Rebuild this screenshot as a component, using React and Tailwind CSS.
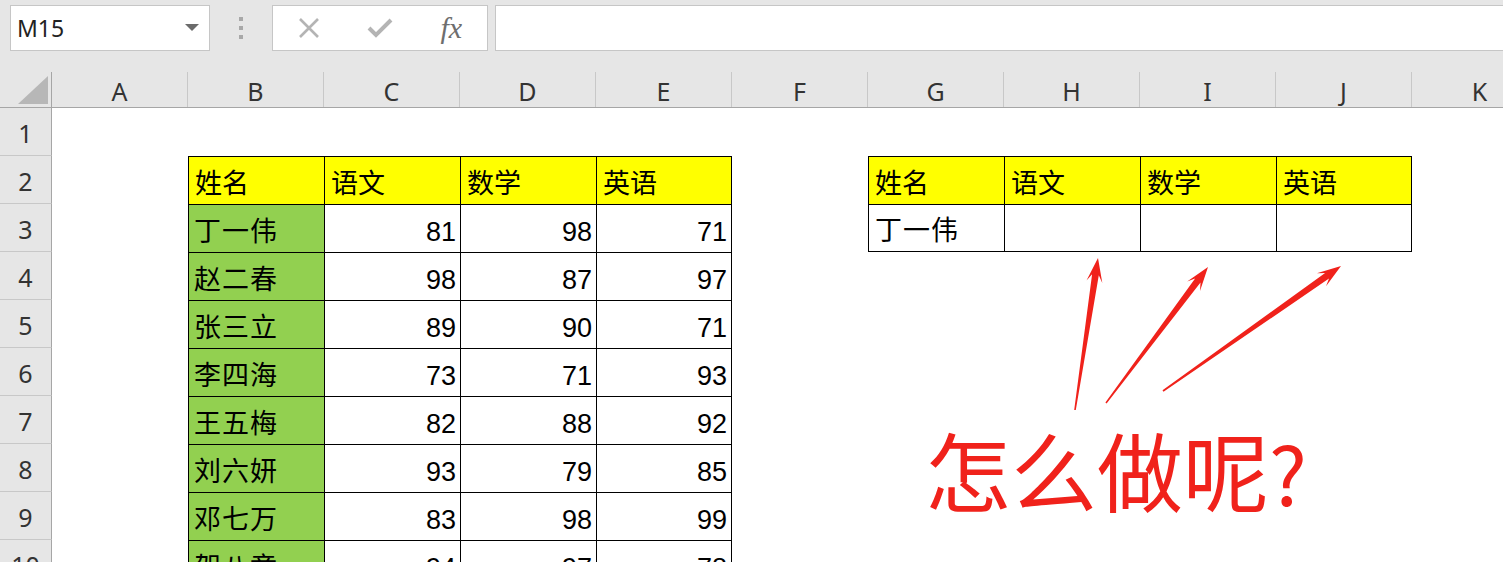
import React from 'react';

const COLS = ['A', 'B', 'C', 'D', 'E', 'F', 'G', 'H', 'I', 'J', 'K'];

const scores = [
  ['丁一伟', 81, 98, 71],
  ['赵二春', 98, 87, 97],
  ['张三立', 89, 90, 71],
  ['李四海', 73, 71, 93],
  ['王五梅', 82, 88, 92],
  ['刘六妍', 93, 79, 85],
  ['邓七万', 83, 98, 99],
  ['贺八章', 94, 97, 78],
];

const heads = ['姓名', '语文', '数学', '英语'];

const cjk = { fontFamily: '"Noto Sans CJK SC", "Noto Sans", sans-serif' };
const arial = { fontFamily: '"Liberation Sans", Arial, sans-serif' };
const ui = { fontFamily: '"Noto Sans", "Noto Sans CJK SC", sans-serif' };

// cell content for sheet row r (1-based), column c (0 = A)
function cellFor(r, c) {
  // left table: B..E, rows 2..10
  if (c >= 1 && c <= 4 && r >= 2) {
    const col = c - 1;
    const cls = 'border-l border-t border-black ' + (col === 3 ? 'border-r ' : '');
    if (r === 2) {
      return (
        <div className={cls + 'h-full bg-[#ffff00] flex items-center pl-[6px] pt-[3px] text-[27px] text-black'} style={cjk}>
          {heads[col]}
        </div>
      );
    }
    const row = scores[r - 3];
    if (!row) return null;
    if (col === 0) {
      return (
        <div className={cls + 'h-full bg-[#92d050] flex items-center pl-[5px] pt-[3px] text-[27px] text-black tracking-[1px]'} style={cjk}>
          {row[0]}
        </div>
      );
    }
    return (
      <div className={cls + 'h-full bg-white flex items-center justify-end pr-[4px] pt-[7px] text-[27px] text-black'} style={arial}>
        {row[col]}
      </div>
    );
  }
  // right table: G..J, rows 2..3
  if (c >= 6 && c <= 9 && (r === 2 || r === 3)) {
    const col = c - 6;
    const cls = 'border-l border-t border-black ' + (col === 3 ? 'border-r ' : '') + (r === 3 ? 'border-b ' : '');
    if (r === 2) {
      return (
        <div className={cls + 'h-full bg-[#ffff00] flex items-center pl-[6px] pt-[3px] text-[27px] text-black'} style={cjk}>
          {heads[col]}
        </div>
      );
    }
    return (
      <div className={cls + 'h-full bg-white flex items-center pl-[6px] pt-[3px] text-[27px] text-black tracking-[1px]'} style={cjk}>
        {col === 0 ? '丁一伟' : ''}
      </div>
    );
  }
  return null;
}

function arrowPoints(tx, ty, px, py) {
  const dx = px - tx;
  const dy = py - ty;
  const len = Math.hypot(dx, dy);
  const ux = dx / len;
  const uy = dy / len;
  const nx = -uy;
  const ny = ux;
  const p = (a, b) => `${(px - ux * a + nx * b).toFixed(1)},${(py - uy * a + ny * b).toFixed(1)}`;
  const tail = (b) => `${(tx + nx * b).toFixed(1)},${(ty + ny * b).toFixed(1)}`;
  return [tail(0.8), p(17, 3.4), p(24, 8), `${px},${py}`, p(24, -8), p(17, -3.4), tail(-0.8)].join(' ');
}

function Arrows() {
  return (
    <svg className="absolute left-0 top-0 pointer-events-none" width="1503" height="562">
      <polygon points={arrowPoints(1075, 410, 1098, 258)} fill="#f0221b" />
      <polygon points={arrowPoints(1106, 403, 1208, 267)} fill="#f0221b" />
      <polygon points={arrowPoints(1163, 391, 1341, 266)} fill="#f0221b" />
    </svg>
  );
}

function Toolbar() {
  return (
    <div className="h-[72px] bg-[#e6e6e6] flex items-start pt-[5px] pl-[10px]">
      <div className="w-[200px] h-[46px] bg-white border border-[#c6c6c6] flex items-center justify-between pl-[6px] pr-[10px]">
        <span className="text-[23px] text-[#222]" style={ui}>M15</span>
        <svg width="14" height="8" viewBox="0 0 14 8"><polygon points="0,0 14,0 7,7" fill="#6b6b6b" /></svg>
      </div>
      <div className="w-[62px] h-[46px] flex flex-col items-center justify-center gap-[5px]">
        <div className="w-[4px] h-[4px] bg-[#a8a8a8]" />
        <div className="w-[4px] h-[4px] bg-[#a8a8a8]" />
        <div className="w-[4px] h-[4px] bg-[#a8a8a8]" />
      </div>
      <div className="w-[216px] h-[46px] bg-white border border-[#c6c6c6] flex items-center">
        <div className="w-[72px] flex justify-center">
          <svg width="22" height="22" viewBox="0 0 22 22">
            <path d="M2 2 L20 20 M20 2 L2 20" stroke="#b4b4b4" strokeWidth="2.6" />
          </svg>
        </div>
        <div className="w-[72px] flex justify-center">
          <svg width="26" height="22" viewBox="0 0 26 22">
            <path d="M2 11 L9 18 L24 3" stroke="#b4b4b4" strokeWidth="4" fill="none" />
          </svg>
        </div>
        <div className="w-[72px] flex justify-center">
          <span className="text-[30px] italic text-[#6e6e6e] leading-none" style={{ fontFamily: '"Liberation Serif", "Times New Roman", serif' }}>fx</span>
        </div>
      </div>
      <div className="ml-[7px] flex-1 h-[46px] bg-white border border-[#c6c6c6] border-r-0" />
    </div>
  );
}

export default function App() {
  const rows = Array.from({ length: 10 }, (_, i) => i + 1);
  return (
    <div className="relative w-[1503px] h-[562px] overflow-hidden bg-white">
      <Toolbar />
      {/* column header */}
      <div className="flex h-[36px] bg-[#e6e6e6] border-b border-[#a6a6a6]">
        <div className="w-[52px] shrink-0 border-r border-[#a6a6a6] flex items-end justify-end pr-[3px] pb-[3px]">
          <svg width="30" height="28" viewBox="0 0 30 28"><polygon points="30,0 30,28 0,28" fill="#b7b7b7" /></svg>
        </div>
        {COLS.map((c) => (
          <div key={c} className="w-[136px] shrink-0 border-r border-[#c8c8c8] flex items-center justify-center text-[25px] text-[#333] pt-[4px]" style={ui}>
            {c}
          </div>
        ))}
      </div>
      {/* sheet rows */}
      {rows.map((r) => (
        <div key={r} className="flex h-[48px]">
          <div className="w-[52px] shrink-0 bg-[#e6e6e6] border-r border-[#a6a6a6] border-b border-b-[#c8c8c8] flex items-center justify-center text-[25px] text-[#333] pt-[5px]" style={ui}>
            {r}
          </div>
          {COLS.map((c, ci) => (
            <div key={c} className="w-[136px] shrink-0 h-[48px]">
              {cellFor(r, ci)}
            </div>
          ))}
        </div>
      ))}
      <Arrows />
      <div className="absolute left-[925px] top-[426px] flex items-baseline leading-none text-[#f0221b] whitespace-nowrap" style={cjk}>
        <span className="text-[86px]">怎么做呢</span>
        <span className="text-[80px]">?</span>
      </div>
    </div>
  );
}
